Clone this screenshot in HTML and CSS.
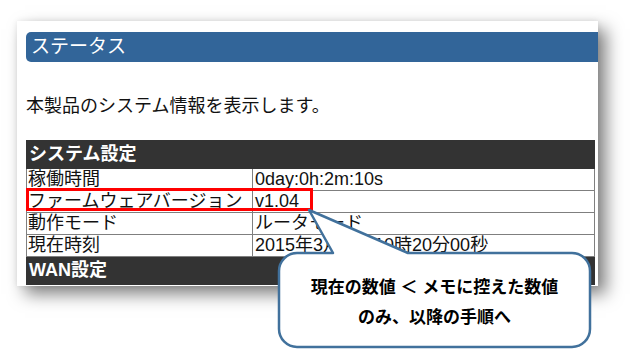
FILE: index.html
```html
<!DOCTYPE html>
<html lang="ja">
<head>
  <meta charset="UTF-8" />
  <meta name="viewport" content="width=device-width, initial-scale=1.0" />
  <title>ステータス</title>
  <link rel="stylesheet" href="styles.css">
</head>
<body>
<div class="page">
  <div class="shot">
    <div class="title-bar">ステータス</div>
    <p class="desc">本製品のシステム情報を表示します。</p>
    <table class="status">
      <tr><th colspan="2">システム設定</th></tr>
      <tr><td class="key">稼働時間</td><td>0day:0h:2m:10s</td></tr>
      <tr><td class="key">ファームウェアバージョン</td><td>v1.04</td></tr>
      <tr><td class="key">動作モード</td><td>ルータモード</td></tr>
      <tr><td class="key">現在時刻</td><td>2015年3月1日 10時20分00秒</td></tr>
      <tr><th colspan="2">WAN設定</th></tr>
    </table>
  </div>

  <div class="mark"></div>

  <svg class="callout" width="640" height="359" viewBox="0 0 640 359">
    <path d="M297 253 L333 253 L309 210 L408 253 L572 253 A18 18 0 0 1 590 271 L590 329 A18 18 0 0 1 572 347 L297 347 A18 18 0 0 1 279 329 L279 271 A18 18 0 0 1 297 253 Z"
          fill="#fff" stroke="#41719c" stroke-width="2.5" stroke-linejoin="round" />
  </svg>
  <div class="callout-text">
    現在の数値 ＜ メモに控えた数値<br>
    のみ、以降の手順へ
  </div>
</div>
</body>
</html>
```

FILE: styles.css
```css
body {
  margin: 0;
  padding: 0;
  background: #fff;
  font-family: "Liberation Sans", "Noto Sans CJK JP", sans-serif;
  color: #111;
}
.page {
  position: relative;
  width: 640px;
  height: 359px;
  overflow: hidden;
}
.shot {
  margin: 21px 0 0 17px;
  width: 581px;
  height: 265px;
  box-sizing: border-box;
  padding: 11px 0 0 9px;
  background: #fff;
  overflow: hidden;
  box-shadow: 8px 8px 16px rgba(0,0,0,0.5), 0 0 6px rgba(0,0,0,0.08);
}
.title-bar {
  height: 30px;
  line-height: 30px;
  padding-left: 5px;
  background: #326599;
  color: #fff;
  font-size: 19px;
  border-radius: 5px 0 0 5px;
}
.desc {
  margin: 32px 0 22px;
  font-size: 18px;
  line-height: 24px;
}
table.status {
  width: 569px;
  border-collapse: collapse;
  font-size: 18px;
}
table.status th {
  height: 27px;
  padding: 0 2px;
  line-height: 27px;
  text-align: left;
  font-weight: bold;
  color: #fff;
  background: #333;
  border: 1px solid #333;
}
table.status td {
  height: 21px;
  padding: 0 0 0 2px;
  line-height: 21px;
  white-space: nowrap;
  border: 1px solid #7f7f7f;
}
table.status td.key {
  width: 224px;
  padding-left: 1px;
}
.mark {
  position: absolute;
  left: 26px;
  top: 188px;
  width: 281px;
  height: 17px;
  border: 3px solid #f00;
}
.callout {
  position: absolute;
  left: 0;
  top: 0;
}
.callout-text {
  position: absolute;
  left: 279px;
  top: 253px;
  width: 311px;
  padding-top: 20px;
  text-align: center;
  font-size: 17px;
  line-height: 30px;
  font-weight: bold;
  color: #000;
}
```
